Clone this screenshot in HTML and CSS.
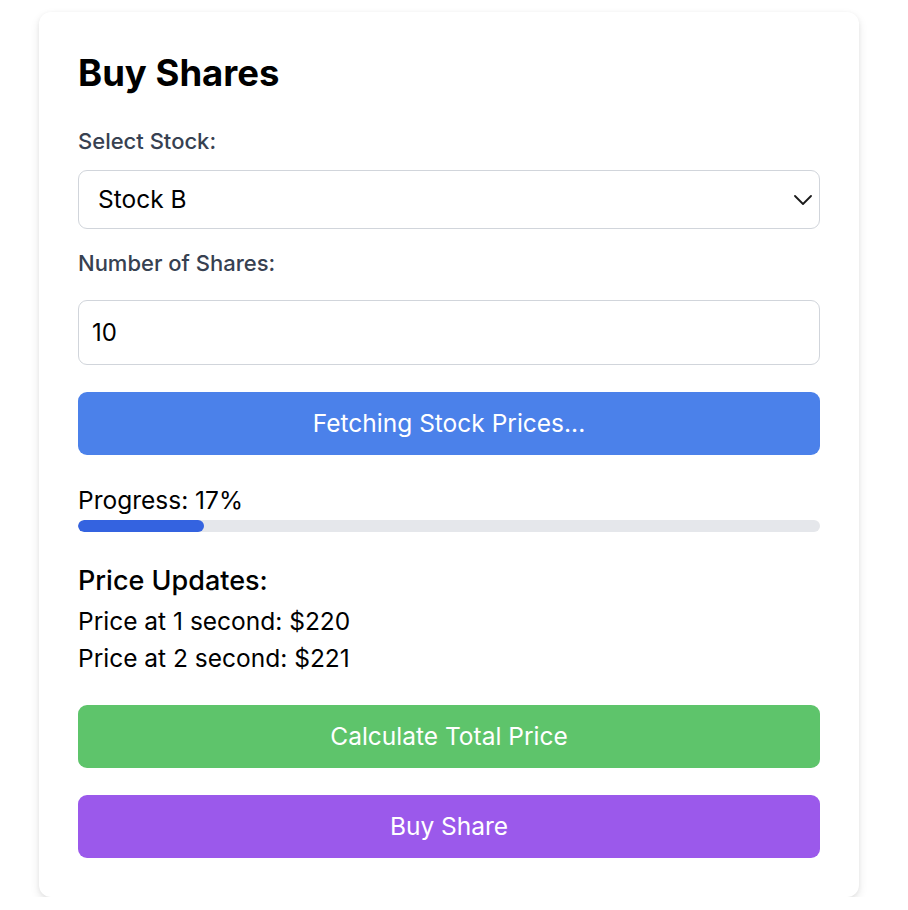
FILE: index.html
```html
<!DOCTYPE html>
<html lang="en">
<head>
<meta charset="utf-8">
<title>Buy Shares</title>
<link rel="stylesheet" href="styles.css">
</head>
<body>
<main class="card">
  <h1 class="title">Buy Shares</h1>
  <label class="label label-stock" for="stock">Select Stock:</label>
  <div class="select-wrap">
    <select id="stock" class="select">
      <option>Stock A</option>
      <option selected>Stock B</option>
      <option>Stock C</option>
    </select>
    <svg class="chevron" width="18" height="10" viewBox="0 0 18 10" aria-hidden="true"><path d="M1 1 L9 9 L17 1" fill="none" stroke="#1a1a1a" stroke-width="1.8" stroke-linecap="round" stroke-linejoin="round"/></svg>
  </div>
  <label class="label label-shares" for="shares">Number of Shares:</label>
  <input id="shares" class="input" type="number" value="10">
  <button class="btn btn-blue">Fetching Stock Prices...</button>
  <div class="progress-text">Progress: 17%</div>
  <div class="track"><div class="fill" style="width:17%"></div></div>
  <h2 class="updates-title">Price Updates:</h2>
  <p class="update update-first">Price at 1 second: $220</p>
  <p class="update">Price at 2 second: $221</p>
  <button class="btn btn-green">Calculate Total Price</button>
  <button class="btn btn-purple">Buy Share</button>
</main>
</body>
</html>
```

FILE: styles.css
```css
* { box-sizing: border-box; }
html, body { margin: 0; padding: 0; background: #ffffff; }
body {
  font-family: Inter, "Noto Sans", "Liberation Sans", sans-serif;
  color: #000;
}
.card {
  width: 820px;
  margin: 12px 0 0 39px;
  padding: 39px;
  background: #fff;
  border-radius: 12px;
  box-shadow: 0 4px 10px rgba(0,0,0,0.10), 0 1px 4px rgba(0,0,0,0.05);
  display: flex;
  flex-direction: column;
}
.title {
  margin: 0 0 32px;
  font-size: 36.5px;
  line-height: 44px;
  font-weight: 700;
}
.label {
  display: block;
  font-size: 22px;
  line-height: 28px;
  color: #374151;
  font-weight: 500;
}
.label-stock { margin-bottom: 14.5px; }
.label-shares { margin: 20px 0 23px; }
.select-wrap { position: relative; }
.select {
  width: 100%;
  height: 59px;
  -webkit-appearance: none;
  appearance: none;
  border: 1px solid #d1d5db;
  border-radius: 9px;
  background: #fff;
  font-family: inherit;
  font-size: 24.5px;
  padding: 0 19px;
  color: #000;
}
.chevron {
  position: absolute;
  right: 8px;
  top: 25px;
  pointer-events: none;
}
.input {
  width: 100%;
  height: 65px;
  border: 1px solid #d1d5db;
  border-radius: 9px;
  font-family: inherit;
  font-size: 24px;
  padding: 0 13px;
  color: #000;
  background: #fff;
}
.btn {
  width: 100%;
  height: 63px;
  border: none;
  border-radius: 9px;
  color: #fff;
  font-family: inherit;
  font-size: 24.5px;
  font-weight: 400;
}
.btn-blue { background: #4b81ea; margin-top: 27px; }
.btn-green { background: #5ec46b; margin-top: 27.5px; }
.btn-purple { background: #9b59eb; margin-top: 27px; }
.progress-text {
  margin-top: 30px;
  font-size: 24.5px;
  line-height: 30px;
}
.track {
  margin-top: 5px;
  height: 12px;
  border-radius: 6px;
  background: #e5e7eb;
  overflow: hidden;
}
.fill {
  height: 100%;
  background: #3463e0;
  border-radius: 6px;
}
.updates-title {
  margin: 33.5px 0 0;
  font-size: 27px;
  line-height: 32px;
  font-weight: 500;
}
.update {
  margin: 0;
  font-size: 24.5px;
  line-height: 37px;
}
.update-first { margin-top: 6px; }
```
